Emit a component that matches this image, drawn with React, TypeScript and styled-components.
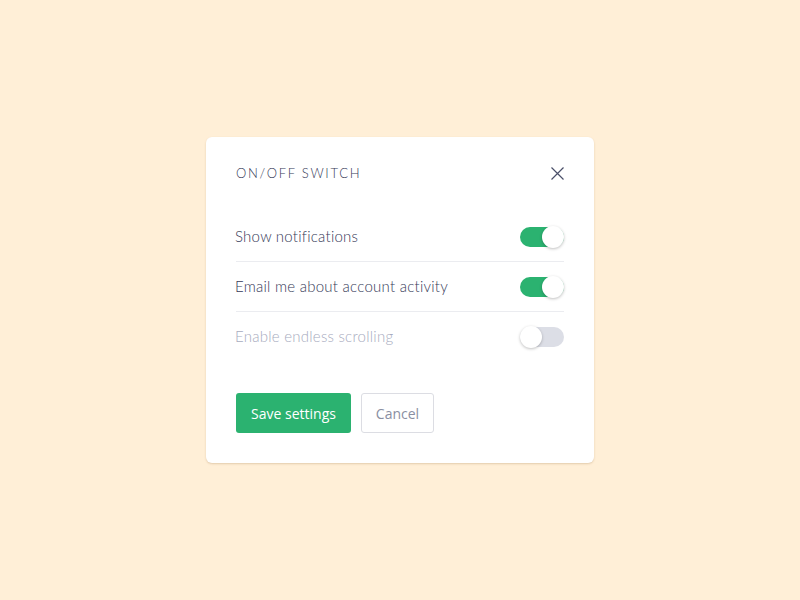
import React, { useState } from 'react';
import styled, { createGlobalStyle } from 'styled-components';

const GlobalStyle = createGlobalStyle`
  html, body {
    margin: 0;
    padding: 0;
    background: #ffefd7;
  }
  * {
    box-sizing: border-box;
  }
`;

const Page = styled.div`
  display: flex;
  align-items: center;
  justify-content: center;
  height: 100vh;
  width: 100vw;
`;

const Card = styled.div`
  width: 388px;
  background: #ffffff;
  border-radius: 6px;
  padding: 26px 30px 30px;
  box-shadow: 0 1px 2px rgba(190, 160, 120, 0.45);
`;

const Header = styled.div`
  display: flex;
  align-items: center;
  justify-content: space-between;
  height: 20px;
`;

const Title = styled.h2`
  margin: 0;
  font-family: 'Lato', sans-serif;
  font-weight: 300;
  font-size: 13px;
  letter-spacing: 1.7px;
  color: #363a58;
`;

const CloseButton = styled.button`
  border: none;
  background: none;
  padding: 0;
  width: 14px;
  height: 14px;
  display: flex;
  align-items: center;
  justify-content: center;
  cursor: pointer;
`;

const List = styled.div`
  margin-top: 29px;
  display: flex;
  flex-direction: column;
`;

const Row = styled.div`
  height: 50px;
  display: flex;
  align-items: center;
  justify-content: space-between;
  border-bottom: 1px solid #ebecf0;

  &:last-child {
    border-bottom: none;
  }
`;

const Label = styled.span<{ $disabled?: boolean }>`
  font-family: 'Lato', sans-serif;
  font-weight: 300;
  font-size: 15px;
  letter-spacing: 0.25px;
  color: ${(p) => (p.$disabled ? '#a7abbe' : '#363a58')};
  margin-left: -1px;
  margin-top: -2px;
`;

const Track = styled.button<{ $on: boolean }>`
  position: relative;
  width: 44px;
  height: 20px;
  border: none;
  padding: 0;
  border-radius: 10px;
  background: ${(p) => (p.$on ? '#2bb270' : '#dcdee6')};
  cursor: pointer;
`;

const Knob = styled.span<{ $on: boolean }>`
  position: absolute;
  top: -1px;
  left: ${(p) => (p.$on ? '22px' : '0')};
  width: 22px;
  height: 22px;
  border-radius: 50%;
  background: #ffffff;
  box-shadow: 0 1px 3px rgba(0, 0, 0, 0.25);
`;

const Footer = styled.div`
  margin-top: 31px;
  display: flex;
  gap: 10px;
`;

const PrimaryButton = styled.button`
  height: 40px;
  width: 115px;
  border: none;
  border-radius: 3px;
  background: #2bb270;
  color: #ffffff;
  font-family: 'Open Sans', sans-serif;
  font-size: 14px;
  cursor: pointer;
`;

const SecondaryButton = styled.button`
  height: 40px;
  width: 73px;
  border: 1px solid #dcdde3;
  border-radius: 3px;
  background: #ffffff;
  color: #8a8fa2;
  font-family: 'Open Sans', sans-serif;
  font-size: 14px;
  cursor: pointer;
`;

const settings = [
  { id: 'notifications', label: 'Show notifications', on: true },
  { id: 'email', label: 'Email me about account activity', on: true },
  { id: 'scroll', label: 'Enable endless scrolling', on: false },
];

const App: React.FC = () => {
  const [values, setValues] = useState(settings);

  const toggle = (id: string) => {
    setValues((prev) => prev.map((s) => (s.id === id ? { ...s, on: !s.on } : s)));
  };

  return (
    <Page>
      <GlobalStyle />
      <Card>
        <Header>
          <Title>ON/OFF SWITCH</Title>
          <CloseButton aria-label="Close">
            <svg width="13" height="13" viewBox="0 0 13 13">
              <path d="M0.5 0.5 L12.5 12.5 M12.5 0.5 L0.5 12.5" stroke="#4a4f69" strokeWidth="1.2" fill="none" />
            </svg>
          </CloseButton>
        </Header>
        <List>
          {values.map((s) => (
            <Row key={s.id}>
              <Label $disabled={!s.on}>{s.label}</Label>
              <Track $on={s.on} onClick={() => toggle(s.id)}>
                <Knob $on={s.on} />
              </Track>
            </Row>
          ))}
        </List>
        <Footer>
          <PrimaryButton>Save settings</PrimaryButton>
          <SecondaryButton>Cancel</SecondaryButton>
        </Footer>
      </Card>
    </Page>
  );
};

export default App;
